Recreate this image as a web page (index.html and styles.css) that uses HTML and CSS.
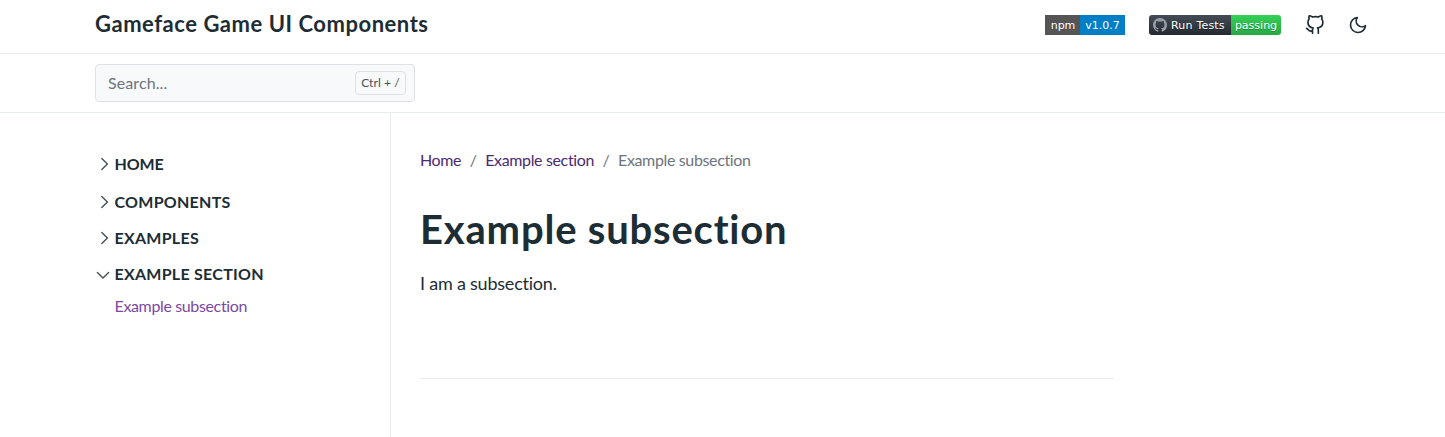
FILE: index.html
```html
<!DOCTYPE html>
<html lang="en">
<head>
<meta charset="utf-8">
<title>Example subsection</title>
<link rel="stylesheet" href="styles.css">
</head>
<body>
<header class="navbar">
  <a class="brand">Gameface Game UI Components</a>
  <div class="tools">
    <span class="badge npm"><span class="badge-key">npm</span><span class="badge-value">v1.0.7</span></span>
    <span class="badge ci"><span class="badge-key"><svg class="mark" viewBox="0 0 16 16"><path fill="#959da5" d="M8 0C3.58 0 0 3.58 0 8c0 3.54 2.29 6.53 5.47 7.59.4.07.55-.17.55-.38 0-.19-.01-.82-.01-1.49-2.01.37-2.53-.49-2.69-.94-.09-.23-.48-.94-.82-1.13-.28-.15-.68-.52-.01-.53.63-.01 1.08.58 1.23.82.72 1.21 1.87.87 2.33.66.07-.52.28-.87.51-1.07-1.78-.2-3.64-.89-3.64-3.95 0-.87.31-1.59.82-2.15-.08-.2-.36-1.02.08-2.12 0 0 .67-.21 2.2.82.64-.18 1.32-.27 2-.27s1.36.09 2 .27c1.53-1.04 2.2-.82 2.2-.82.44 1.1.16 1.92.08 2.12.51.56.82 1.27.82 2.15 0 3.07-1.87 3.75-3.65 3.95.29.25.54.73.54 1.48 0 1.07-.01 1.93-.01 2.2 0 .21.15.46.55.38A8.01 8.01 0 0 0 16 8c0-4.42-3.58-8-8-8z"/></svg><span class="ci-name">Run Tests</span></span><span class="badge-value">passing</span></span>
    <svg class="icon github" viewBox="0 0 24 24"><path d="M9 19c-5 1.5-5-2.5-7-3m14 6v-3.87a3.37 3.37 0 0 0-.94-2.61c3.14-.35 6.44-1.54 6.44-7A5.44 5.44 0 0 0 20 4.77 5.07 5.07 0 0 0 19.91 1S18.73.65 16 2.48a13.38 13.38 0 0 0-7 0C6.27.65 5.09 1 5.09 1A5.07 5.07 0 0 0 5 4.77a5.44 5.44 0 0 0-1.5 3.78c0 5.42 3.3 6.61 6.44 7A3.37 3.37 0 0 0 9 18.13V22"/></svg>
    <svg class="icon moon" viewBox="0 0 24 24"><path d="M21 12.79A9 9 0 1 1 11.21 3 7 7 0 0 0 21 12.79z"/></svg>
  </div>
</header>
<div class="searchbar">
  <div class="search"><span class="placeholder">Search...</span><kbd class="hint">Ctrl + /</kbd></div>
</div>
<div class="layout">
  <nav class="sidebar">
    <div class="group first"><svg class="chevron" viewBox="0 0 16 16"><path d="M6.8 2.4l5.6 5.6-5.6 5.6"/></svg><span class="g-home">HOME</span></div>
    <div class="group"><svg class="chevron" viewBox="0 0 16 16"><path d="M6.8 2.4l5.6 5.6-5.6 5.6"/></svg><span>COMPONENTS</span></div>
    <div class="group"><svg class="chevron" viewBox="0 0 16 16"><path d="M6.8 2.4l5.6 5.6-5.6 5.6"/></svg><span>EXAMPLES</span></div>
    <div class="group"><svg class="chevron" viewBox="0 0 16 16"><path d="M2.4 6.4l5.6 5.6 5.6-5.6"/></svg><span>EXAMPLE SECTION</span></div>
    <a class="sub">Example subsection</a>
  </nav>
  <main class="content">
    <div class="crumbs"><a>Home</a><span class="slash">/</span><a>Example section</a><span class="slash">/</span><span class="current">Example subsection</span></div>
    <h1 class="title">Example subsection</h1>
    <p class="text">I am a subsection.</p>
    <hr class="rule">
  </main>
</div>
</body>
</html>
```
FILE: styles.css
```css
* { box-sizing: border-box; }
body {
  margin: 0;
  height: 437px;
  overflow: hidden;
  background: #fff;
  color: #1d2d35;
  font-family: Lato, "Open Sans", sans-serif;
  font-size: 16px;
  font-variant-ligatures: none;
  white-space: nowrap;
}
.navbar {
  display: flex;
  justify-content: space-between;
  height: 54px;
  padding: 0 77px 0 95px;
  border-bottom: 1px solid #e9ecef;
}
.brand { font-size: 22px; font-weight: 700; line-height: 48px; letter-spacing: .53px; }
.tools { display: flex; align-items: center; height: 50px; }
.badge {
  display: flex;
  height: 20px;
  overflow: hidden;
  color: #fff;
  font: 11px/20px "DejaVu Sans", sans-serif;
}
.badge-key, .badge-value { display: flex; align-items: center; justify-content: center; height: 20px; line-height: 22px; }
.npm { width: 80px; margin-right: 24px; }
.npm .badge-key { width: 35px; padding-left: 1px; background: #555; }
.npm .badge-value { width: 45px; background: #007ec6; }
.ci { width: 132px; margin-right: 24px; border-radius: 3px; text-shadow: 0 1px 0 rgba(0, 0, 0, .3); }
.ci .badge-key { width: 82px; padding-left: 4px; justify-content: flex-start; background: linear-gradient(#444d56, #24292e); }
.ci .badge-value { width: 50px; background: linear-gradient(#34d058, #28a745); }
.npm .badge-key, .npm .badge-value, .ci-name, .ci .badge-value { padding-top: 1px; }
.ci-name { letter-spacing: .2px; }
.mark { width: 14px; height: 14px; margin-right: 4px; flex: none; }
.icon { width: 20px; height: 20px; fill: none; stroke: #1d2d35; stroke-width: 2; stroke-linecap: round; stroke-linejoin: round; }
.github { margin-right: 23px; }
.searchbar { height: 59px; padding: 10px 95px; border-bottom: 1px solid #e9ecef; }
.search {
  display: flex;
  align-items: center;
  justify-content: space-between;
  width: 320px;
  height: 38px;
  padding: 0 8px 0 12px;
  border: 1px solid #dee2e6;
  border-radius: 4px;
  background: #f8f9fa;
  color: #6c757d;
}
.placeholder { padding-bottom: 2px; letter-spacing: .1px; }
.hint {
  width: 51px;
  height: 24px;
  border: 1px solid #dee2e6;
  border-radius: 4px;
  font: 12px/22px Lato, sans-serif;
  letter-spacing: .1px;
  text-align: center;
  color: #495057;
}
.layout { display: flex; height: 324px; }
.sidebar { width: 391px; padding: 33px 0 0 95px; border-right: 1px solid #e9ecef; }
.group { display: flex; align-items: center; height: 36px; font-weight: 700; letter-spacing: .26px; }
.group span { padding-bottom: 2px; }
.group .g-home { letter-spacing: -.1px; }
.first { margin-bottom: 2px; }
.chevron { width: 16px; height: 16px; margin-right: 3.5px; fill: none; stroke: #495057; stroke-width: 1.4; stroke-linecap: round; stroke-linejoin: round; }
.sub { display: block; margin-left: 19.5px; line-height: 28px; letter-spacing: -.36px; color: #7a4a9f; }
.content { width: 723px; padding: 35px 0 0 29px; }
.crumbs { display: flex; line-height: 24px; letter-spacing: -.36px; color: #6c757d; }
.crumbs a { color: #4c2a72; }
.slash { width: 24px; text-align: center; }
.title { margin: 32px 0 0; font-size: 40px; font-weight: 700; line-height: 50px; letter-spacing: .8px; }
.text { margin: 15px 0 0; font-size: 18px; line-height: 28px; letter-spacing: -.22px; }
.rule { margin: 81px 0 0; border: 0; border-top: 1px solid #e8e9ea; }
```
